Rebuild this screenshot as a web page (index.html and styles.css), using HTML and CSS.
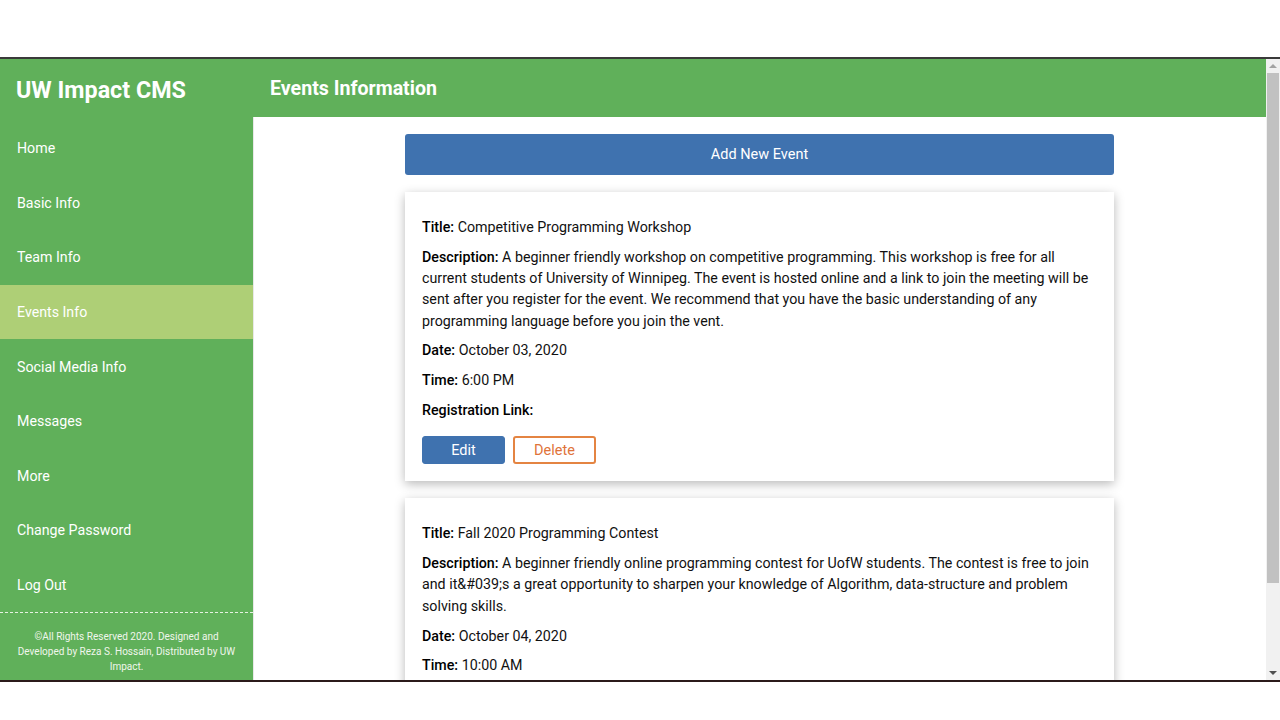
FILE: index.html
```html
<!DOCTYPE html>
<html>
<head>
<meta charset="utf-8">
<title>UW Impact CMS</title>
<link rel="stylesheet" href="styles.css">
</head>
<body>
<div class="topgap"></div>
<div class="app">
  <aside class="sidebar">
    <div class="brand">UW Impact CMS</div>
    <nav class="nav">
      <a class="nav-item">Home</a>
      <a class="nav-item">Basic Info</a>
      <a class="nav-item">Team Info</a>
      <a class="nav-item active">Events Info</a>
      <a class="nav-item">Social Media Info</a>
      <a class="nav-item">Messages</a>
      <a class="nav-item">More</a>
      <a class="nav-item">Change Password</a>
      <a class="nav-item">Log Out</a>
    </nav>
    <div class="footer">©All Rights Reserved 2020. Designed and Developed by Reza S. Hossain, Distributed by UW Impact.</div>
  </aside>
  <main class="main">
    <header class="header">Events Information</header>
    <section class="content">
      <div class="wrap">
        <button class="add-btn">Add New Event</button>
        <div class="card">
          <p><b>Title:</b> Competitive Programming Workshop</p>
          <p><b>Description:</b> A beginner friendly workshop on competitive programming. This workshop is free for all current students of University of Winnipeg. The event is hosted online and a link to join the meeting will be sent after you register for the event. We recommend that you have the basic understanding of any programming language before you join the vent.</p>
          <p><b>Date:</b> October 03, 2020</p>
          <p><b>Time:</b> 6:00 PM</p>
          <p><b>Registration Link:</b></p>
          <div class="actions">
            <button class="btn edit">Edit</button>
            <button class="btn delete">Delete</button>
          </div>
        </div>
        <div class="card card-cut">
          <p><b>Title:</b> Fall 2020 Programming Contest</p>
          <p><b>Description:</b> A beginner friendly online programming contest for UofW students. The contest is free to join and it&amp;#039;s a great opportunity to sharpen your knowledge of Algorithm, data-structure and problem solving skills.</p>
          <p><b>Date:</b> October 04, 2020</p>
          <p><b>Time:</b> 10:00 AM</p>
        </div>
      </div>
    </section>
  </main>
  <div class="scrollbar">
    <div class="arrow up"></div>
    <div class="track"><div class="thumb"></div></div>
    <div class="arrow down"></div>
  </div>
</div>
</body>
</html>
```
FILE: styles.css
```css
* { box-sizing: border-box; }
html, body { margin: 0; padding: 0; background: #fff; }
body { font-family: Roboto, "Liberation Sans", sans-serif; height: 720px; overflow: hidden; }
.topgap { height: 57px; }
.app {
  height: 625px;
  border-top: 2px solid #3a3a3a;
  border-bottom: 2px solid #2b1a1a;
  display: flex;
  overflow: hidden;
}
.sidebar {
  width: 253px;
  flex: none;
  background: #60b05a;
  color: #fff;
  display: flex;
  flex-direction: column;
}
.brand {
  height: 62px;
  padding: 17px 0 0 16px;
  font-size: 23.3px;
  font-weight: 700;
  line-height: 28px;
}
.nav { display: flex; flex-direction: column; }
.nav-item {
  height: 54.6px;
  display: flex;
  align-items: center;
  padding-left: 17px;
  font-size: 14.2px;
}
.nav-item.active { background: #aecf76; }
.footer {
  margin-top: 0;
  border-top: 1px dashed #e6f2e2;
  padding: 16px 12px 0;
  font-size: 10px;
  line-height: 15px;
  text-align: center;
  color: #f0f6ec;
}
.main {
  flex: 1;
  display: flex;
  flex-direction: column;
  min-width: 0;
}
.header {
  height: 58px;
  flex: none;
  background: #60b05a;
  color: #fff;
  font-size: 19.6px;
  font-weight: 700;
  padding: 17px 0 0 17px;
  line-height: 26px;
}
.content {
  flex: 1;
  overflow: hidden;
  background: #fff;
  border-left: 1px solid #e8e8e8;
}
.wrap {
  width: 709px;
  margin: 17px 0 0 151px;
}
.add-btn {
  display: block;
  width: 100%;
  height: 41px;
  background: #3f72af;
  color: #fff;
  border: none;
  border-radius: 3px;
  font-family: inherit;
  font-size: 14.5px;
}
.card {
  margin-top: 17px;
  background: #fff;
  box-shadow: 0 3px 10px rgba(0,0,0,0.28);
  padding: 25px 20px 17px 17px;
}
.card-cut { padding-bottom: 40px; }
.card p {
  margin: 0 0 8.5px;
  font-size: 14.25px;
  line-height: 21.3px;
  color: #111;
}
.card b { font-weight: 500; color: #000; }
.actions { display: flex; gap: 8px; margin-top: 15px; }
.btn {
  width: 83px;
  height: 28px;
  border-radius: 3px;
  font-family: inherit;
  font-size: 14.5px;
}
.btn.edit { background: #3f72af; border: 1px solid #3f72af; color: #fff; }
.btn.delete { background: #fff; border: 2px solid #e48442; color: #e0733a; }
.scrollbar {
  width: 14px;
  flex: none;
  background: #f1f1f1;
  display: flex;
  flex-direction: column;
}
.arrow { height: 14px; flex: none; position: relative; }
.arrow.up::after, .arrow.down::after {
  content: "";
  position: absolute;
  left: 3px;
  width: 0; height: 0;
  border-left: 4px solid transparent;
  border-right: 4px solid transparent;
}
.arrow.up::after { top: 5px; border-bottom: 4px solid #a3a3a3; }
.arrow.down::after { top: 5px; border-top: 4px solid #505050; }
.track { flex: 1; padding: 0 1px; }
.thumb { height: 510px; background: #c1c1c1; }
```
